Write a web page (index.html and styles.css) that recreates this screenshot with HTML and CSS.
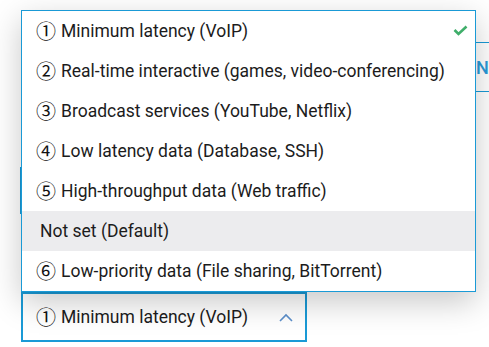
FILE: index.html
```html
<!DOCTYPE html>
<html lang="en">
<head>
    <meta charset="UTF-8">
    <meta name="viewport" content="width=device-width, initial-scale=1.0">
    <title>QoS</title>
    <link rel="stylesheet" href="styles.css">
</head>
<body>
    <div class="page">
        <div class="toolbar">
            <div class="field"></div>
            <button class="btn" type="button">NEXT</button>
        </div>
        <div class="field2"></div>
        <div class="select">
            <span class="num">①</span>
            <span class="label">Minimum latency (VoIP)</span>
            <svg class="chevron" width="14" height="9" viewBox="0 0 14 9">
                <path d="M1 8 L7 2 L13 8" fill="none" stroke="#5b8fcb" stroke-width="1.6"/>
            </svg>
        </div>

        <ul class="menu">
            <li class="item selected">
                <span class="num">①</span><span class="text">Minimum latency (VoIP)</span>
                <svg class="check" width="15" height="11" viewBox="0 0 15 11">
                    <path d="M1.5 5 L5.5 9 L13.5 1.5" fill="none" stroke="#3fae6a" stroke-width="2.6"/>
                </svg>
            </li>
            <li class="item"><span class="num">②</span><span class="text">Real-time interactive (games, video-conferencing)</span></li>
            <li class="item"><span class="num">③</span><span class="text">Broadcast services (YouTube, Netflix)</span></li>
            <li class="item"><span class="num">④</span><span class="text">Low latency data (Database, SSH)</span></li>
            <li class="item"><span class="num">⑤</span><span class="text">High-throughput data (Web traffic)</span></li>
            <li class="item plain hover"><span>Not set (Default)</span></li>
            <li class="item"><span class="num">⑥</span><span class="text">Low-priority data (File sharing, BitTorrent)</span></li>
        </ul>
    </div>
</body>
</html>
```

FILE: styles.css
```css
*{
    box-sizing: border-box;
}
body{
    margin: 0;
    background-color: #fff;
    font-family: Roboto, "DejaVu Sans", sans-serif;
    color: #1c1c1c;
    overflow: hidden;
}
.page{
    position: relative;
    height: 347px;
    padding: 42px 0 0 21px;
    display: flex;
    flex-direction: column;
}
.toolbar{
    display: flex;
    height: 50px;
}
.field{
    width: 455px;
    flex-shrink: 0;
}
.btn{
    flex-shrink: 0;
    width: 100px;
    height: 50px;
    padding: 0;
    text-align: left;
    border: none;
    border-top: 1px solid #1a9ad6;
    border-bottom: 1px solid #1a9ad6;
    background: transparent;
    color: #2a9ad8;
    font-family: Roboto, sans-serif;
    font-size: 18px;
    font-weight: 500;
}
.field2{
    margin: 75px 0 0 -1px;
    width: 200px;
    height: 47px;
    border-left: 2px solid #1a9ad6;
}
.select{
    margin-top: 78px;
    width: 286px;
    height: 50px;
    border: 2px solid #1a9ad6;
    display: flex;
    align-items: center;
    padding: 0 12px 0 13px;
    font-size: 17.5px;
}
.select .label{
    flex: 1;
    margin-left: 5px;
}
.num{
    font-family: "Noto Sans CJK JP", "DejaVu Sans", sans-serif;
    font-size: 20px;
    line-height: 1;
    font-weight: 400;
    color: #111;
}
.menu{
    position: absolute;
    top: 10px;
    left: 21px;
    width: 455px;
    margin: 0;
    padding: 0;
    list-style: none;
    background-color: #fff;
    border: 1px solid #1a9ad6;
    box-shadow: 0 10px 30px rgba(0, 0, 0, 0.22);
}
.item{
    position: relative;
    height: 40px;
    display: flex;
    align-items: center;
    padding-left: 14px;
    font-size: 17.5px;
    white-space: nowrap;
}
.item .text{
    margin-left: 5px;
}
.item.plain{
    padding-left: 18px;
}
.item.hover{
    background-color: #ececee;
}
.check{
    position: absolute;
    right: 7px;
    top: 14px;
}
```
